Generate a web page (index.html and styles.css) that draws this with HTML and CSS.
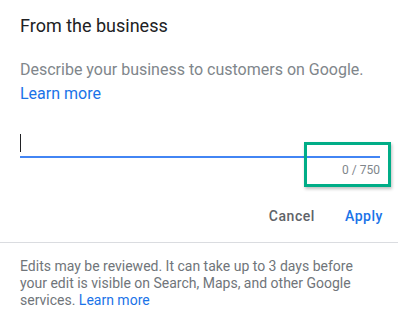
FILE: index.html
```html
<!DOCTYPE html>
<html lang="en">
<head>
    <meta charset="UTF-8">
    <meta name="viewport" content="width=device-width, initial-scale=1.0">
    <title>From the business</title>
    <link rel="stylesheet" href="styles.css">
</head>
<body>
    <div class="dialog">
        <section class="editor">
            <h2 class="editor-title">From the business</h2>
            <p class="editor-hint">
                Describe your business to customers on Google.
                <a href="#" class="link">Learn more</a>
            </p>
            <div class="field">
                <div class="field-input"><span class="caret"></span></div>
                <div class="field-count">0 / 750</div>
                <div class="highlight"></div>
            </div>
            <div class="actions">
                <button class="btn btn-cancel">Cancel</button>
                <button class="btn btn-apply">Apply</button>
            </div>
        </section>
        <footer class="notice">
            Edits may be reviewed. It can take up to 3 days before your edit is visible on Search, Maps, and other Google services. <a href="#" class="link">Learn more</a>
        </footer>
    </div>
</body>
</html>
```

FILE: styles.css
```css
*{padding:0; margin:0; box-sizing:border-box;}
html,body{width:100%; height:100%; background:#fff;}
body{font-family:Roboto, "Liberation Sans", sans-serif; color:#202124;}

:root{
    --blue:#1a73e8;
    --line-blue:#4285f4;
    --grey:#80868b;
    --grey-dark:#5f6368;
    --divider:#dadce0;
    --mark:#00ad87;
}

.link{color:var(--blue); text-decoration:none;}

/* top editor */
.editor{padding:14px 18px 0 20px;}

.editor-title{
    font-size:18px; font-weight:400; line-height:24px;
    color:#202124;
}

.editor-hint{
    margin-top:20px;
    font-size:16px; line-height:24px;
    color:var(--grey);
}
.editor-hint .link{display:block;}

/* text field */
.field{position:relative; margin-top:26px;}

.field-input{
    height:26px; padding-top:2px;
    border-bottom:2px solid var(--line-blue);
}
.caret{display:block; width:1px; height:18px; background:#202124;}

.field-count{
    margin-top:4px;
    font-size:12px; line-height:16px; text-align:right;
    color:var(--grey);
}

/* annotation box over the counter */
.highlight{
    position:absolute; left:284px; top:10px;
    width:87px; height:45px;
    border:3px solid var(--mark);
    box-shadow:1px 2px 3px rgba(0,0,0,0.25);
}

.actions{
    display:flex; justify-content:flex-end; gap:30px;
    margin:28px -3px 0 0;
}

.btn{
    border:none; background:none;
    font-family:inherit; font-size:14px; font-weight:500; line-height:20px;
    letter-spacing:0.55px;
}
.btn-cancel{color:var(--grey-dark);}
.btn-apply{color:var(--blue);}

/* bottom notice */
.notice{
    margin-top:16px; padding:15px 40px 0 20px;
    border-top:1px solid var(--divider);
    font-size:14px; line-height:17px;
    color:#70757a;
}
```
